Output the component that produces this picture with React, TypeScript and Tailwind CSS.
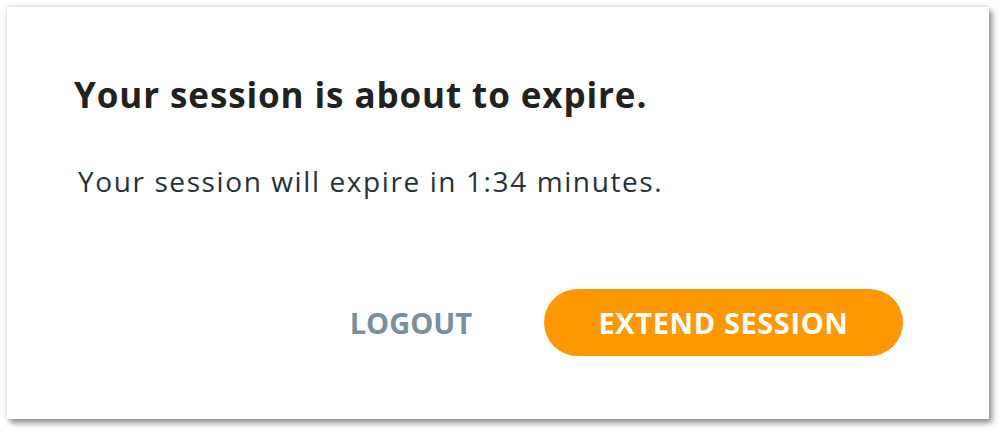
import React from "react";

export default function App() {
  return (
    <div className="w-[1002px] h-[432px] bg-white pt-[7px] pl-[7px]" style={{ fontFamily: '"Open Sans", "Noto Sans", sans-serif' }}>
      <div className="w-[982px] h-[412px] bg-white shadow-[3px_4px_6px_rgba(0,0,0,0.45),0_-1px_4px_rgba(0,0,0,0.12)] flex flex-col pl-[67px] pr-[86px] pt-[68px]">
        <h1 className="text-[35px] leading-[40px] font-bold text-[#212121] tracking-[0.9px]">Your session is about to expire.</h1>
        <p className="mt-[50px] ml-[4px] text-[28px] leading-[32px] text-[#263238] tracking-[1.6px]">Your session will expire in 1:34 minutes.</p>
        <div className="mt-[92px] flex justify-end items-center">
          <button className="text-[29px] font-bold text-[#78909c] mr-[72px]">LOGOUT</button>
          <button className="w-[359px] h-[67px] rounded-full bg-[#ff9800] text-white text-[29px] font-bold tracking-[0.6px]">EXTEND SESSION</button>
        </div>
      </div>
    </div>
  );
}
